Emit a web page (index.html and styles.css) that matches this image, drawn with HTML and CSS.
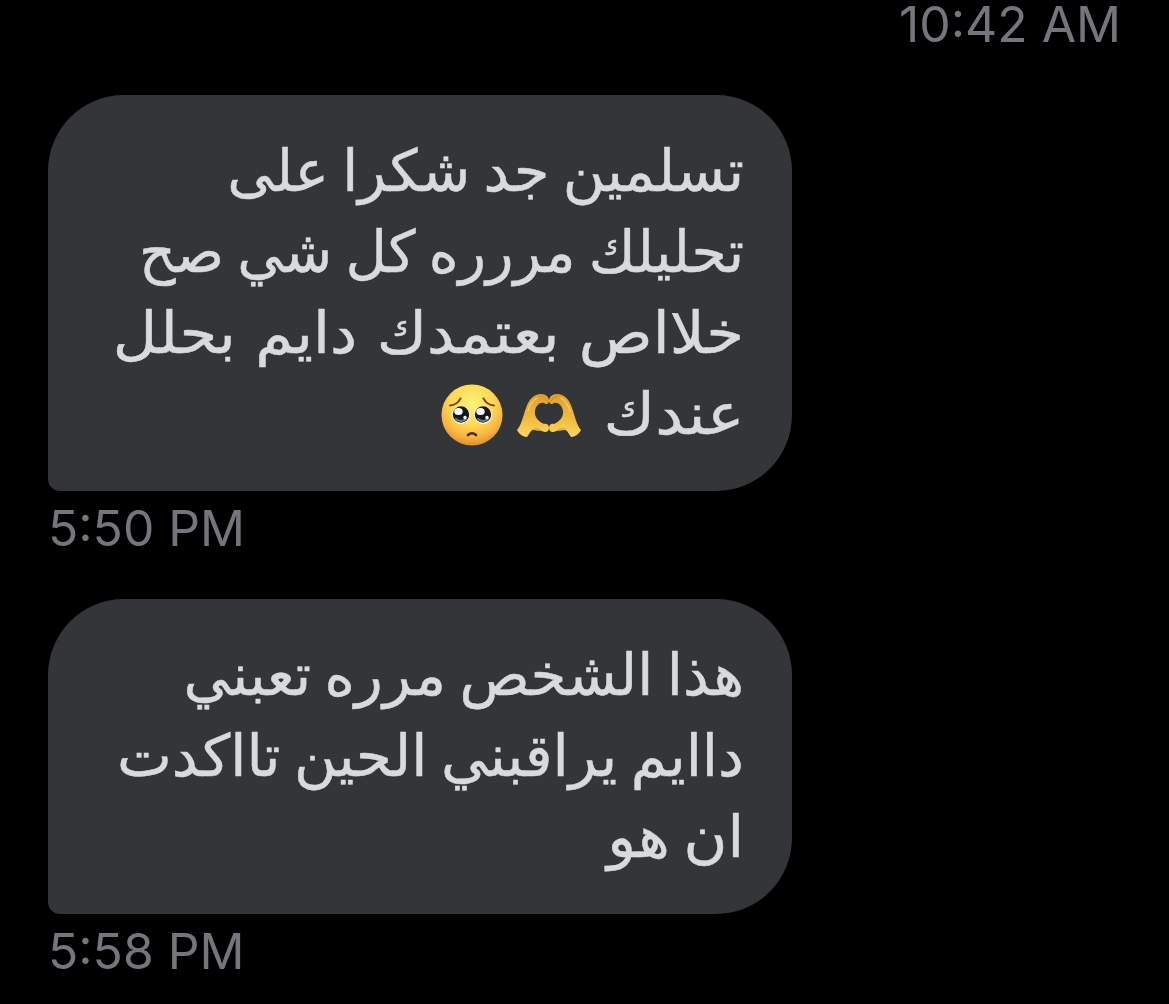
FILE: index.html
```html
<!DOCTYPE html>
<html lang="ar">

<head>
    <meta charset="UTF-8" />
    <meta name="viewport" content="width=device-width, initial-scale=1.0" />
    <title>Messages</title>
    <link rel="stylesheet" href="styles.css">
</head>

<body>
    <main class="chat">
        <time class="time sent">10:42 AM</time>
        <div class="bubble first" dir="rtl">
            <p class="fit-a">تسلمين جد شكرا على</p>
            <p class="fit-b">تحليلك مررره كل شي صح</p>
            <p class="fit-c">خلااص بعتمدك دايم بحلل</p>
            <p class="with-emoji">
                <span class="fit-d">عندك</span>
                <svg class="hands" viewBox="0 0 66 46" role="img">
                    <defs>
                        <linearGradient id="skin" x1="0" y1="0" x2="0" y2="1">
                            <stop offset="0" stop-color="#dfa02c" />
                            <stop offset="0.5" stop-color="#efb63c" />
                            <stop offset="1" stop-color="#ffd75e" />
                        </linearGradient>
                        <g id="hand">
                            <path fill="url(#skin)" d="M1 38 C6 32 7 24 10 16 C13 7 18 2 25 2 C30 2 33 5 33 9 C33 12 30 13 28 11 C24 10 20 13 19 19 C18 25 23 30 28 32 C31 31 33 33 33 36 C33 40 29 41 26 39 C21 39 17 37 15 39 L11 45 C7 45 3 42 1 38Z" />
                            <path fill="none" stroke="#c78a24" stroke-width="0.8" stroke-linecap="round" d="M25 4 Q29 5 31 9 M16 38 Q20 35 25 38.500" />
                            <path fill="none" stroke="#ffe07a" stroke-width="1.4" stroke-linecap="round" opacity="0.6" d="M12 19 Q15 9 21 6" />
                        </g>
                    </defs>
                    <use href="#hand" />
                    <use href="#hand" transform="matrix(-1 0 0 1 66 0)" />
                </svg>
                <svg class="face" viewBox="0 0 62 62" role="img">
                    <defs>
                        <radialGradient id="face" cx="0.5" cy="0.32" r="0.68">
                            <stop offset="0" stop-color="#fff27a" />
                            <stop offset="0.5" stop-color="#ffd954" />
                            <stop offset="0.8" stop-color="#f7b53f" />
                            <stop offset="1" stop-color="#e3902c" />
                        </radialGradient>
                    </defs>
                    <circle cx="31" cy="31" r="30.5" fill="url(#face)" />
                    <path fill="none" stroke="#7a4410" stroke-width="2" stroke-linecap="round" d="M9 21.5 Q16 21 19.5 14.5 M53 21.5 Q46 21 42.5 14.5" />
                    <circle cx="20" cy="31" r="9" fill="#fff" />
                    <circle cx="42" cy="31" r="9" fill="#fff" />
                    <circle cx="20" cy="30.5" r="8.2" fill="#15191c" />
                    <circle cx="42" cy="30.5" r="8.2" fill="#15191c" />
                    <path fill="none" stroke="#6b7f86" stroke-width="2" stroke-linecap="round" d="M15 35 Q20 39 25 35 M37 35 Q42 39 47 35" />
                    <ellipse cx="17.5" cy="27.5" rx="4.2" ry="3.6" fill="#fff" />
                    <ellipse cx="39.5" cy="27.5" rx="4.2" ry="3.6" fill="#fff" />
                    <circle cx="24" cy="33.5" r="1.7" fill="#fff" />
                    <circle cx="46" cy="33.5" r="1.7" fill="#fff" />
                    <path fill="none" stroke="#4a250a" stroke-width="2.6" stroke-linecap="round" d="M27 51 Q31 47.5 35 51" />
                </svg>
            </p>
        </div>
        <time class="time">5:50 PM</time>
        <div class="bubble second" dir="rtl">
            <p class="fit-e">هذا الشخص مرره تعبني</p>
            <p class="fit-f">داايم يراقبني الحين تااكدت</p>
            <p class="fit-g">ان هو</p>
        </div>
        <time class="time">5:58 PM</time>
    </main>
</body>

</html>
```

FILE: styles.css
```css
body {
    margin: 0;
    background-color: #000;
    font-family: Inter, sans-serif;
}

.chat {
    display: flex;
    flex-direction: column;
    align-items: flex-start;
    height: 1004px;
    padding: 0 48px;
    box-sizing: border-box;
}

.time {
    height: 60px;
    padding-top: 7px;
    box-sizing: border-box;
    font-size: 49.8px;
    line-height: 60px;
    color: #74767b;
}

.sent {
    align-self: flex-end;
    height: 95px;
    padding-top: 0;
    line-height: 49px;
}

.bubble {
    flex-shrink: 0;
    width: 744px;
    padding: 36px 48px;
    box-sizing: border-box;
    border-radius: 76px 76px 76px 12px;
    background-color: #343539;
    color: #d9dadb;
    font-family: "DejaVu Sans", sans-serif;
    font-size: 58px;
    word-spacing: -5px;
    -webkit-text-stroke: 0.5px #d9dadb;
}

.first {
    height: 396px;
}

.second {
    height: 315px;
    margin-top: 48px;
}

.bubble p {
    height: 81px;
    margin: 0;
    line-height: 81px;
    white-space: nowrap;
    transform-origin: right center;
}

.fit-a {
    transform: scaleX(0.994);
}

.fit-b {
    transform: scaleX(0.981);
}

.bubble .fit-c {
    word-spacing: 0;
    transform: scaleX(1.054);
}

.fit-d {
    transform: scaleX(1.08);
    transform-origin: right center;
}

.fit-f {
    transform: scaleX(1.005);
}

.fit-g {
    transform: scaleX(1.03);
}

.with-emoji {
    display: flex;
    align-items: center;
}

.hands {
    width: 66px;
    height: 46px;
    margin-right: 32px;
}

.face {
    width: 62px;
    height: 62px;
    margin-right: 13px;
}
```
